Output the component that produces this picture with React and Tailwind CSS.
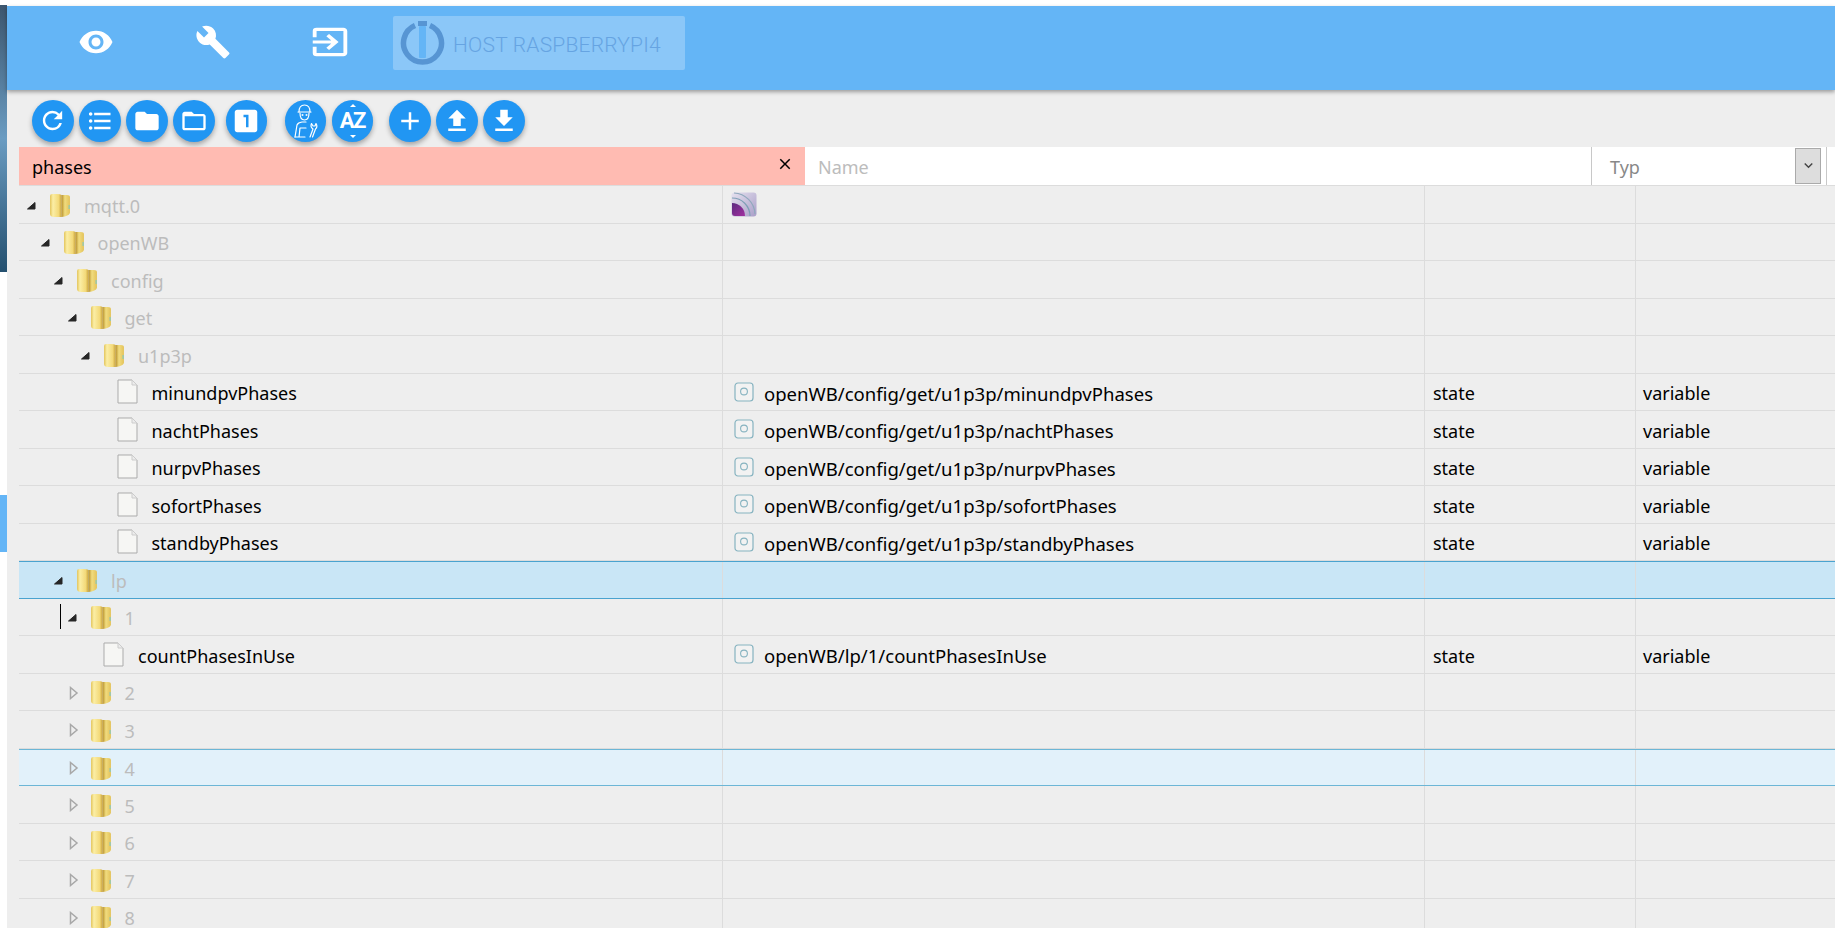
import React from 'react';
import {
  MdRemoveRedEye, MdBuild, MdExitToApp, MdRefresh, MdFormatListBulleted, MdFolder,
  MdFolderOpen, MdLooksOne, MdAdd, MdFileUpload, MdFileDownload, MdClose, MdKeyboardArrowDown,
} from 'react-icons/md';

const font = { fontFamily: '"Noto Sans", "Open Sans", sans-serif' };

function FolderIcon() {
  return (
    <svg width="22" height="25" viewBox="0 0 21 25" preserveAspectRatio="none" className="shrink-0 mt-[2px]">
      <defs>
        <linearGradient id="foldL" x1="0" y1="0" x2="1" y2="0">
          <stop offset="0" stopColor="#e3c458" />
          <stop offset="0.25" stopColor="#fbeea6" />
          <stop offset="0.75" stopColor="#f3d978" />
          <stop offset="1" stopColor="#c9a23a" />
        </linearGradient>
        <linearGradient id="foldR" x1="0" y1="0" x2="1" y2="0">
          <stop offset="0" stopColor="#b8912c" />
          <stop offset="0.4" stopColor="#f1dc7e" />
          <stop offset="1" stopColor="#e3c25a" />
        </linearGradient>
      </defs>
      <path d="M1 3 Q1 1 3 1 L7 1 Q11 1 12 2 L12 24 L5 24 Q1 24 1 21 Z" fill="url(#foldL)" />
      <path d="M12 2 L17 2 Q20 2 20 4 L20 20 Q19 23 12 24 Z" fill="url(#foldR)" />
      <rect x="18.5" y="12" width="1.5" height="4" fill="#9fc8a8" />
    </svg>
  );
}

function FileIcon() {
  return (
    <svg width="21" height="25" viewBox="0 0 21 25" className="shrink-0">
      <path d="M1 1 H15 L20 6 V24 H1 Z" fill="#f6f6f4" stroke="#ababab" strokeWidth="1" />
      <path d="M15 1 V6 H20" fill="#ececec" stroke="#cccccc" strokeWidth="1" />
    </svg>
  );
}

function MqttIcon() {
  return (
    <svg width="26" height="25" viewBox="0 0 26 25" className="block">
      <defs>
        <linearGradient id="mq" x1="0" y1="0" x2="1" y2="1">
          <stop offset="0" stopColor="#e6e2ef" />
          <stop offset="1" stopColor="#a99ec8" />
        </linearGradient>
        <linearGradient id="mqp" x1="0" y1="0" x2="1" y2="1">
          <stop offset="0" stopColor="#5c2a80" />
          <stop offset="1" stopColor="#a2309f" />
        </linearGradient>
      </defs>
      <rect x="0.5" y="0.5" width="25" height="24" rx="3" fill="url(#mq)" />
      <path d="M1 11 A13 13 0 0 1 14 24 H4 Q1 24 1 21 Z" fill="url(#mqp)" />
      <path d="M1 6 A18 18 0 0 1 19 24" fill="none" stroke="#7f9fb5" strokeWidth="1.2" />
      <path d="M3 1 A22 22 0 0 1 24 22" fill="none" stroke="#8fa8bc" strokeWidth="1.2" />
    </svg>
  );
}

function StateIcon() {
  return (
    <svg width="20" height="20" viewBox="0 0 20 20" className="shrink-0">
      <rect x="1" y="1" width="18" height="18" rx="3" fill="#f2f2f2" stroke="#86b3c0" strokeWidth="1.2" />
      <circle cx="10" cy="9.5" r="3.4" fill="none" stroke="#86b3c0" strokeWidth="1.1" />
    </svg>
  );
}

function WorkerIcon() {
  return (
    <svg width="34" height="36" viewBox="0 0 34 36" fill="none" stroke="white" strokeWidth="1.2" strokeLinecap="round" strokeLinejoin="round">
      <path d="M11 9 Q11 2 16.5 2 Q22 2 22 9" />
      <path d="M10 9 H23" />
      <path d="M12 10 Q12 17 16.5 17 Q21 17 21 10" />
      <circle cx="14.5" cy="12" r="0.4" />
      <circle cx="18.5" cy="12" r="0.4" />
      <path d="M7 34 L9 22 Q10 19.5 14 19 L18 19" />
      <path d="M7 34 H17 M11 34 L12 25 H18" />
      <path d="M22 34 L25 26 Q22 24 23.5 20.5 L25 23 H27 L28 20.5 Q30 24 27.5 26 L24.5 34" />
    </svg>
  );
}

function SortIcon() {
  return (
    <div className="relative flex items-center justify-center w-full h-full text-white">
      <span className="absolute top-[4px] left-[18px] w-0 h-0 border-x-[3px] border-x-transparent border-b-[3px] border-b-white" />
      <span className="text-[22px] font-bold tracking-[-1.5px] leading-none" style={{ fontFamily: 'Roboto, sans-serif' }}>AZ</span>
      <span className="absolute bottom-[4px] left-[18px] w-0 h-0 border-x-[3px] border-x-transparent border-t-[3px] border-t-white" />
    </div>
  );
}

function RoundBtn({ children, className = '' }) {
  return (
    <div className={`w-[41.5px] h-[41.5px] rounded-full bg-[#2196f3] flex items-center justify-center text-white shadow-[0_3px_5px_rgba(0,0,0,0.3)] shrink-0 ${className}`}>
      {children}
    </div>
  );
}

function Arrow({ open }) {
  if (open) {
    return (
      <svg width="11" height="11" viewBox="0 0 11 11" className="block mt-[2px]">
        <path d="M1.5 9 L9 2.5 V9 Z" fill="#262626" stroke="#262626" strokeWidth="1" strokeLinejoin="round" />
      </svg>
    );
  }
  return (
    <svg width="10" height="14" viewBox="0 0 10 14" className="block mt-[2px] ml-[2px]">
      <path d="M1.5 1.5 L8 7 L1.5 12.5 Z" fill="none" stroke="#a8a8a8" strokeWidth="1.5" />
    </svg>
  );
}

const rows = [
  { label: 'mqtt.0', level: 0, open: true, mqtt: true },
  { label: 'openWB', level: 1, open: true },
  { label: 'config', level: 2, open: true },
  { label: 'get', level: 3, open: true },
  { label: 'u1p3p', level: 4, open: true },
  { label: 'minundpvPhases', level: 5, id: 'openWB/config/get/u1p3p/minundpvPhases' },
  { label: 'nachtPhases', level: 5, id: 'openWB/config/get/u1p3p/nachtPhases' },
  { label: 'nurpvPhases', level: 5, id: 'openWB/config/get/u1p3p/nurpvPhases' },
  { label: 'sofortPhases', level: 5, id: 'openWB/config/get/u1p3p/sofortPhases' },
  { label: 'standbyPhases', level: 5, id: 'openWB/config/get/u1p3p/standbyPhases' },
  { label: 'lp', level: 2, open: true, hl: 'strong' },
  { label: '1', level: 3, open: true, caret: true },
  { label: 'countPhasesInUse', level: 4, id: 'openWB/lp/1/countPhasesInUse' },
  { label: '2', level: 3 },
  { label: '3', level: 3 },
  { label: '4', level: 3, hl: 'soft' },
  { label: '5', level: 3 },
  { label: '6', level: 3 },
  { label: '7', level: 3 },
  { label: '8', level: 3 },
];

function Row({ row }) {
  const isState = !!row.id;
  let tone = 'border-b border-[#dcdcdc]';
  if (row.hl === 'strong') tone = 'bg-[#c9e6f6] border-y border-l border-[#4aa3cf] -ml-px';
  if (row.hl === 'soft') tone = 'bg-[#e2f1fa] border-y border-l border-[#6cb6d6] -ml-px';

  return (
    <div className={`flex h-[37.5px] shrink-0 items-center text-[18px] ${tone}`}>
      <div className="w-[703px] h-full shrink-0 flex items-center relative">
        {/* indent per tree level */}
        <div style={{ width: 7 + row.level * 13.5 }} className="shrink-0" />
        <div className="w-[23px] shrink-0 flex items-center">
          {!isState && <Arrow open={row.open} />}
        </div>
        {isState ? <FileIcon /> : <FolderIcon />}
        <span className={`pt-[4px] ${isState ? 'ml-[14px] text-black' : 'ml-[13px] text-[#bcbcbc]'}`}>{row.label}</span>
        {row.caret && <span className="absolute left-[41px] top-[5px] h-[25px] w-px bg-black" />}
      </div>
      <div className="w-[702px] h-full shrink-0 border-l border-[#dcdcdc] flex items-center pl-[11px] gap-[10px]">
        {row.mqtt && <div className="-ml-[3px] mt-[1px]"><MqttIcon /></div>}
        {isState && <StateIcon />}
        {isState && <span className="text-black text-[18.55px] pt-[4px]">{row.id}</span>}
      </div>
      <div className="w-[211px] h-full shrink-0 border-l border-[#dcdcdc] flex items-center pl-[8px] text-black">
        {isState && <span className="pt-[4px]">state</span>}
      </div>
      <div className="flex-1 h-full border-l border-[#dcdcdc] flex items-center pl-[7px] text-black">
        {isState && <span className="pt-[4px]">variable</span>}
      </div>
    </div>
  );
}

export default function App() {
  return (
    <div className="h-screen w-full flex overflow-hidden bg-[#eeeeee]" style={font}>
      {/* strip of the desktop behind the window */}
      <div className="w-[7px] shrink-0 flex flex-col bg-white">
        <div className="h-[267px] mt-[5px] bg-gradient-to-b from-[#3d566e] via-[#6a9cc2] to-[#24506f]" />
        <div className="h-[57px] mt-[223px] bg-[#64b5f6]" />
      </div>

      <div className="flex-1 min-w-0 flex flex-col">
        <div className="h-[6px] bg-white shrink-0" />

        <header className="h-[84px] shrink-0 bg-[#64b5f6] flex items-start shadow-[0_2px_4px_rgba(0,0,0,0.35)] relative z-10">
          <MdRemoveRedEye size={36} className="text-white ml-[71px] mt-[18px]" />
          <MdBuild size={36} className="text-white ml-[81px] mt-[18px]" />
          <MdExitToApp className="text-white ml-[75.5px] mt-[17px] w-[46px] h-[38px]" preserveAspectRatio="none" />
          <div className="ml-[40.5px] mt-[10px] w-[292px] h-[54px] bg-white/25 rounded-[2px] flex items-center pl-[7px] gap-[8px]">
            <svg width="45" height="46" viewBox="0 0 45 46" fill="none">
              <path d="M15 5.5 A19 19 0 1 0 30 5.5" stroke="#5795d3" strokeWidth="5.5" />
              <rect x="18" y="1" width="9" height="5" fill="#5795d3" />
              <rect x="19" y="6" width="7" height="32" rx="1" fill="#64b5f6" />
            </svg>
            <span className="text-[21px] font-light tracking-[0.2px] text-[#66a4e2] pt-[5px]" style={{ fontFamily: 'Roboto, sans-serif' }}>HOST RASPBERRYPI4</span>
          </div>
        </header>

        <div className="h-[57px] shrink-0 flex items-start pt-[10px] pl-[25px] gap-[5.5px]">
          <RoundBtn><MdRefresh size={29} /></RoundBtn>
          <RoundBtn><MdFormatListBulleted size={28} /></RoundBtn>
          <RoundBtn><MdFolder size={28} /></RoundBtn>
          <RoundBtn><MdFolderOpen size={28} /></RoundBtn>
          <RoundBtn className="ml-[5.5px]"><MdLooksOne size={30} /></RoundBtn>
          <RoundBtn className="ml-[12px]"><WorkerIcon /></RoundBtn>
          <RoundBtn><SortIcon /></RoundBtn>
          <RoundBtn className="ml-[10.5px]"><MdAdd size={30} /></RoundBtn>
          <RoundBtn><MdFileUpload size={30} /></RoundBtn>
          <RoundBtn><MdFileDownload size={30} /></RoundBtn>
        </div>

        <div className="ml-[12px] h-[39px] shrink-0 flex text-[18px] border-b border-[#dcdcdc]">
          <div className="w-[786px] h-full bg-[#ffbbb2] flex items-center justify-between pl-[13px] pr-[11px]">
            <span className="text-black pt-[2px]">phases</span>
            <MdClose size={18} className="text-black -mt-[4px]" />
          </div>
          <div className="w-[787px] h-full bg-white border-r border-[#c8c8c8] flex items-center pl-[13px] text-[#bcbcbc]">
            <span className="pt-[2px]">Name</span>
          </div>
          <div className="w-[235px] h-full bg-white border-r border-[#c8c8c8] flex items-center justify-between pl-[18px] pr-[5px] text-[#888888]">
            <span className="pt-[2px]">Typ</span>
            <div className="w-[26px] h-[36px] bg-[#dddddd] border border-[#aaaaaa] flex items-center justify-center -mt-[1px]">
              <MdKeyboardArrowDown size={17} className="text-[#444444]" />
            </div>
          </div>
          <div className="flex-1 bg-white" />
        </div>

        <div className="ml-[12px] flex-1 min-h-0 flex flex-col overflow-hidden">
          {rows.map((r, i) => <Row key={i} row={r} />)}
        </div>
      </div>
    </div>
  );
}
